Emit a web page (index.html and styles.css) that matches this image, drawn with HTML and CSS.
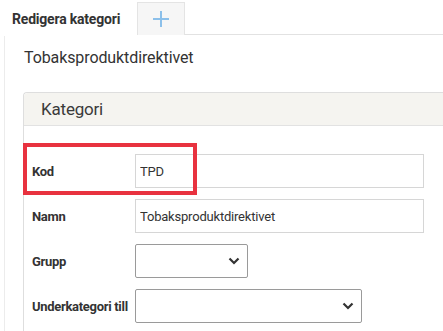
FILE: index.html
```html
<!DOCTYPE html>
<html lang="sv">
<head>
  <meta charset="UTF-8">
  <title>Redigera kategori</title>
  <link rel="stylesheet" href="styles.css">
</head>
<body>
  <div class="tabs">
    <div class="tab active">Redigera kategori</div>
    <div class="tab add">
      <svg width="18" height="18" viewBox="0 0 18 18"><path d="M9 1v16M1 9h16" stroke="#8cc0ea" stroke-width="2" fill="none"/></svg>
    </div>
  </div>

  <div class="content">
    <div class="page-title">Tobaksproduktdirektivet</div>

    <div class="panel">
      <div class="panel-head">Kategori</div>
      <div class="panel-body">
        <!-- Kod -->
        <div class="row">
          <label>Kod</label>
          <input type="text" class="field" value="TPD">
          <div class="highlight"></div>
        </div>
        <!-- Namn -->
        <div class="row">
          <label>Namn</label>
          <input type="text" class="field" value="Tobaksproduktdirektivet">
        </div>
        <!-- Grupp -->
        <div class="row">
          <label>Grupp</label>
          <div class="select small">
            <svg width="12" height="8" viewBox="0 0 12 8"><path d="M1.5 1.5l4.5 4.5 4.5-4.5" stroke="#333" stroke-width="2.2" fill="none"/></svg>
          </div>
        </div>
        <!-- Underkategori -->
        <div class="row">
          <label>Underkategori till</label>
          <div class="select medium">
            <svg width="12" height="8" viewBox="0 0 12 8"><path d="M1.5 1.5l4.5 4.5 4.5-4.5" stroke="#333" stroke-width="2.2" fill="none"/></svg>
          </div>
        </div>
      </div>
    </div>
  </div>
</body>
</html>
```

FILE: styles.css
```css
* {
  margin: 0;
  padding: 0;
  box-sizing: border-box;
}
html, body {
  height: 100%;
  overflow: hidden;
}
body {
  font-family: Roboto, 'Liberation Sans', sans-serif;
  color: #333;
  background: #fff;
}
.tabs {
  display: flex;
  padding-top: 2px;
  height: 35px;
  border-bottom: 1px solid #e2e2e2;
}
.tab {
  height: 33px;
  display: flex;
  align-items: center;
}
.tab.active {
  width: 137px;
  padding-left: 12px;
  font-size: 14px;
  font-weight: bold;
  letter-spacing: -0.2px;
  color: #333;
  background: #fff;
  height: 34px;
}
.tab.add {
  width: 48px;
  justify-content: center;
  background: #f6f6f6;
  border: 1px solid #e4e4e4;
  border-bottom: none;
}
.content {
  margin-left: 4px;
  border-left: 1px solid #ececec;
  padding: 14px 0 0 18px;
  height: 296px;
  overflow: hidden;
}
.page-title {
  font-size: 16px;
  height: 18px;
  line-height: 18px;
  letter-spacing: -0.1px;
  padding-left: 1px;
  color: #333;
}
.panel {
  margin-top: 25px;
  border: 1px solid #dedede;
  border-right: none;
  border-bottom: none;
  border-radius: 4px 0 0 0;
  height: 250px;
}
.panel-head {
  height: 33px;
  background: #f5f4f0;
  border-bottom: 1px solid #e2e2e2;
  font-size: 17px;
  line-height: 32px;
  padding-left: 17px;
  letter-spacing: -0.2px;
  color: #3a3a3a;
  border-radius: 4px 0 0 0;
}
.panel-body {
  padding: 28px 0 0 8px;
  display: flex;
  flex-direction: column;
  gap: 11px;
}
.row {
  position: relative;
  display: flex;
  align-items: center;
  height: 34px;
}
.row label {
  width: 103px;
  font-size: 13px;
  font-weight: bold;
  letter-spacing: -0.3px;
  color: #333;
}
.field {
  width: 289px;
  height: 34px;
  border: 1px solid #d6d6d6;
  padding: 0 4px;
  font-family: Roboto, 'Liberation Sans', sans-serif;
  font-size: 13px;
  letter-spacing: -0.2px;
  color: #333;
  outline: none;
}
.select {
  height: 34px;
  border: 1px solid #9a9a9a;
  border-radius: 2px;
  display: flex;
  align-items: center;
  justify-content: flex-end;
  padding-right: 7px;
}
.select.small {
  width: 113px;
}
.select.medium {
  width: 227px;
}
.highlight {
  position: absolute;
  left: -9px;
  top: -11px;
  width: 174px;
  height: 52px;
  border: 4px solid #e8323f;
}
```
